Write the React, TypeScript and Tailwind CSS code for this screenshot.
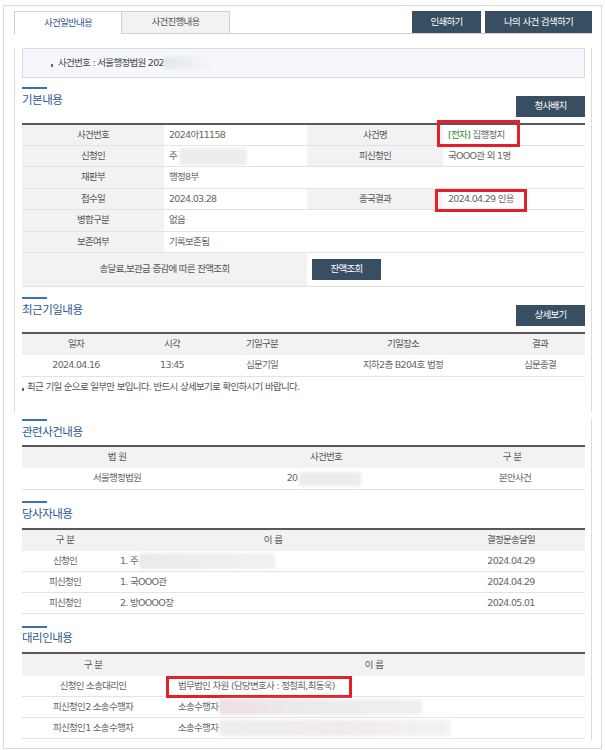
import React from "react";

// 사건 조회 화면 (일반내용 탭)

const Bar = ({ mt }: { mt: string }) => <div className={`${mt} h-[2px] w-[25px] bg-[#3b6fb6]`} />;

const Title = ({ text, mt }: { text: string; mt: string }) => (
  <div className={`${mt} h-[16px] leading-[16px] text-[11.5px] tracking-[-0.5px] text-[#2b5a95]`}>{text}</div>
);

const DarkBtn = ({ w, h, children }: { w: string; h: string; children: React.ReactNode }) => (
  <div className={`${w} ${h} bg-[#384e62] text-white flex items-center justify-center`}>{children}</div>
);

const Blur = ({ className }: { className: string }) => (
  <span className={`inline-block rounded-[3px] blur-[1.5px] ${className}`} />
);

const RedBox = ({ className }: { className: string }) => (
  <div className={`absolute border-[3px] border-[#e4202a] pointer-events-none ${className}`} />
);

function InfoRow({ h, l1, v1, l2, v2 }: { h: string; l1: string; v1?: React.ReactNode; l2?: string; v2?: React.ReactNode }) {
  return (
    <div className={`grid grid-cols-[142px_143px_136px_141px] border-b border-[#e3e3e3] ${h}`}>
      <div className="bg-[#f2f2f2] flex items-center justify-center text-[#555]">{l1}</div>
      <div className="flex items-center pl-[5px] text-[#666]">{v1}</div>
      <div className={`${l2 ? "bg-[#f2f2f2]" : ""} flex items-center justify-center text-[#555]`}>{l2}</div>
      <div className="relative flex items-center pl-[5px] text-[#666]">{v2}</div>
    </div>
  );
}

const TopLine = ({ mt }: { mt: string }) => <div className={`${mt} h-[2px] bg-[#585858]`} />;

export default function App() {
  return (
    <div className="w-[605px] h-[750px] bg-white pt-[5px] pl-[3px] font-['DejaVu_Sans','Noto_Sans_CJK_KR',sans-serif] text-[9.5px] tracking-[-0.7px] text-[#555]">
      <div className="w-[599px] h-[744px] border border-[#d9d9d9] pt-[5px]">
        {/* 상단 */}
        <div className="ml-[10px] mr-[9px]">
          <div className="flex h-[23px]">
            <div className="w-[108px] border-t border-l border-r border-[#cfcfcf] bg-white flex items-center justify-center text-[#34598c]">
              사건일반내용
            </div>
            <div className="w-[108px] border-t border-r border-b border-[#cfcfcf] bg-[#f2f2f2] flex items-center justify-center text-[#555]">
              사건진행내용
            </div>
            <div className="flex-1 border-b border-[#cfcfcf]" />
            <div className="flex gap-[4px] border-b border-[#cfcfcf]">
              <DarkBtn w="w-[69px]" h="h-[22px]">인쇄하기</DarkBtn>
              <DarkBtn w="w-[107px]" h="h-[22px]">나의 사건 검색하기</DarkBtn>
            </div>
          </div>

          <div className="h-[364px] border-l border-r border-[#dcdcdc] pl-[7px] pr-[6px]">
            <div className="mt-[14px] h-[30px] border border-[#d6dce4] bg-[#f5f7fa] flex items-center pl-[28px] text-[#444]">
              <span className="w-[2px] h-[3px] bg-[#666] mt-[4px] mr-[5px]" />
              사건번호 : 서울행정법원 202
              <Blur className="w-[48px] h-[12px] bg-linear-to-r from-[#e3e6eb] to-transparent" />
            </div>

            {/* 기본내용 */}
            <Bar mt="mt-[9px]" />
            <div className="flex justify-between items-start h-[28px]">
              <Title text="기본내용" mt="mt-[3px]" />
              <div className="mt-[7px]">
                <DarkBtn w="w-[69px]" h="h-[21px]">청사배치</DarkBtn>
              </div>
            </div>
            <TopLine mt="mt-[6px]" />
            <InfoRow
              h="h-[21px]"
              l1="사건번호"
              v1="2024아11158"
              l2="사건명"
              v2={
                <>
                  <span className="text-[#2f8a2f]">[전자]</span>&nbsp;집행정지
                  <RedBox className="left-[-6px] top-[-5px] w-[83px] h-[27px]" />
                </>
              }
            />
            <InfoRow
              h="h-[21px]"
              l1="신청인"
              v1={
                <>
                  주
                  <Blur className="ml-[2px] w-[68px] h-[17px] bg-[#ededed]" />
                </>
              }
              l2="피신청인"
              v2="국OOO관 외 1명"
            />
            <InfoRow h="h-[22px]" l1="재판부" v1="행정8부" />
            <InfoRow
              h="h-[21px]"
              l1="접수일"
              v1="2024.03.28"
              l2="종국결과"
              v2={
                <>
                  2024.04.29 인용
                  <RedBox className="left-[-8px] top-[0px] w-[92px] h-[23px]" />
                </>
              }
            />
            <InfoRow h="h-[22px]" l1="병합구분" v1="없음" />
            <InfoRow h="h-[21px]" l1="보존여부" v1="기록보존됨" />
            <div className="grid grid-cols-[285px_1fr] h-[34px] border-b border-[#e3e3e3]">
              <div className="bg-[#f2f2f2] flex items-center justify-center text-[#555]">송달료,보관금 증감에 따른 잔액조회</div>
              <div className="flex items-center pl-[5px]">
                <DarkBtn w="w-[69px]" h="h-[21px]">잔액조회</DarkBtn>
              </div>
            </div>

            {/* 최근기일내용 */}
            <Bar mt="mt-[10px]" />
            <div className="flex justify-between items-start h-[27px]">
              <Title text="최근기일내용" mt="mt-[3px]" />
              <div className="mt-[6px]">
                <DarkBtn w="w-[69px]" h="h-[21px]">상세보기</DarkBtn>
              </div>
            </div>
            <TopLine mt="mt-[6px]" />
            <div className="grid grid-cols-[108px_84px_96px_186px_88px] h-[21px] bg-[#f2f2f2] text-[#555]">
              {["일자", "시각", "기일구분", "기일장소", "결과"].map((t) => (
                <div key={t} className="flex items-center justify-center">{t}</div>
              ))}
            </div>
            <div className="grid grid-cols-[108px_84px_96px_186px_88px] h-[22px] border-b border-[#e3e3e3] text-[#666]">
              {["2024.04.16", "13:45", "심문기일", "지하2층 B204호 법정", "심문종결"].map((t) => (
                <div key={t} className="flex items-center justify-center">{t}</div>
              ))}
            </div>
            <div className="h-[20px] flex items-center text-[#555]">
              <span className="w-[2px] h-[3px] bg-[#666] mt-[4px] mr-[3px]" />
              최근 기일 순으로 일부만 보입니다. 반드시 상세보기로 확인하시기 바랍니다.
            </div>
          </div>
        </div>

        {/* 하단 */}
        <div className="ml-[10px] mr-[9px] mt-[7px] border-r border-[#dcdcdc] pl-[8px] pr-[6px] pb-[2px]">
          {/* 관련사건내용 */}
          <Bar mt="mt-[5px]" />
          <Title text="관련사건내용" mt="mt-[3px]" />
          <TopLine mt="mt-[5px]" />
          <div className="grid grid-cols-[190px_228px_144px] h-[21px] bg-[#f2f2f2]">
            <div className="flex items-center justify-center">법 원</div>
            <div className="flex items-center justify-center">사건번호</div>
            <div className="flex items-center justify-center">구 분</div>
          </div>
          <div className="grid grid-cols-[190px_228px_144px] h-[22px] border-b border-[#e3e3e3] text-[#666]">
            <div className="flex items-center justify-center">서울행정법원</div>
            <div className="flex items-center justify-center pr-[4px]">
              20
              <Blur className="ml-[2px] w-[62px] h-[14px] bg-[#ececec]" />
            </div>
            <div className="flex items-center justify-center pl-[6px]">본안사건</div>
          </div>

          {/* 당사자내용 */}
          <Bar mt="mt-[11px]" />
          <Title text="당사자내용" mt="mt-[3px]" />
          <TopLine mt="mt-[6px]" />
          <div className="grid grid-cols-[86px_330px_146px] h-[21px] bg-[#f2f2f2]">
            <div className="flex items-center justify-center">구 분</div>
            <div className="flex items-center justify-center">이 름</div>
            <div className="flex items-center justify-center">결정문송달일</div>
          </div>
          {[
            { k: "신청인", n: "1. 주", blur: true, d: "2024.04.29" },
            { k: "피신청인", n: "1. 국OOO관", blur: false, d: "2024.04.29" },
            { k: "피신청인", n: "2. 방OOOO장", blur: false, d: "2024.05.01" },
          ].map((r, i) => (
            <div key={i} className="grid grid-cols-[86px_330px_146px] h-[21px] border-b border-[#e3e3e3] text-[#666]">
              <div className="flex items-center justify-center">{r.k}</div>
              <div className="flex items-center pl-[12px]">
                {r.n}
                {r.blur && <Blur className="ml-[1px] w-[136px] h-[16px] bg-linear-to-r from-[#eaeaea] to-[#f1f1f1]" />}
              </div>
              <div className="flex items-center justify-center">{r.d}</div>
            </div>
          ))}

          {/* 대리인내용 */}
          <Bar mt="mt-[12px]" />
          <Title text="대리인내용" mt="mt-[2px]" />
          <TopLine mt="mt-[6px]" />
          <div className="grid grid-cols-[142px_420px] h-[22px] bg-[#f2f2f2]">
            <div className="flex items-center justify-center">구 분</div>
            <div className="flex items-center justify-center">이 름</div>
          </div>
          <div className="grid grid-cols-[142px_420px] h-[21px] border-b border-[#e3e3e3] text-[#666]">
            <div className="flex items-center justify-center">신청인 소송대리인</div>
            <div className="relative flex items-center pl-[14px]">
              법무법인 차원 (담당변호사 : 정철희,최동욱)
              <RedBox className="left-[2px] top-[0px] w-[186px] h-[22px]" />
            </div>
          </div>
          <div className="grid grid-cols-[142px_420px] h-[21px] border-b border-[#e3e3e3] text-[#666]">
            <div className="flex items-center justify-center">피신청인2 소송수행자</div>
            <div className="flex items-center pl-[14px]">
              소송수행자
              <Blur className="ml-[1px] w-[203px] h-[16px] bg-linear-to-r from-[#efdfe2] via-[#ececec] to-[#efefef]" />
            </div>
          </div>
          <div className="grid grid-cols-[142px_420px] h-[21px] border-b border-[#e3e3e3] text-[#666]">
            <div className="flex items-center justify-center">피신청인1 소송수행자</div>
            <div className="flex items-center pl-[14px]">
              소송수행자
              <Blur className="ml-[1px] w-[232px] h-[16px] bg-linear-to-r from-[#eeeeee] via-[#f0eaeb] to-[#f3f3f3]" />
            </div>
          </div>
        </div>
      </div>
    </div>
  );
}
